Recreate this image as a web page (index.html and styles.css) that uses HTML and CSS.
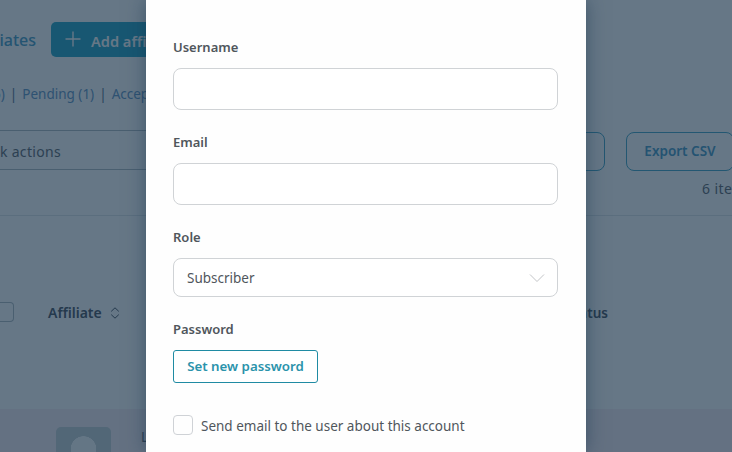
FILE: index.html
```html
<!DOCTYPE html>
<html lang="en">
<head>
    <meta charset="UTF-8">
    <meta name="viewport" content="width=device-width, initial-scale=1.0">
    <title>Affiliates</title>
    <link rel="stylesheet" href="styles.css">
</head>
<body>

    <!-- Affiliates list behind the modal -->
    <div class="page">
        <div class="page-header">
            <h1>iates</h1>
            <button class="add-button">
                <svg width="16" height="16" viewBox="0 0 16 16"><path d="M8 0.5v15M0.5 8h15" /></svg>
                <span>Add affiliate</span>
            </button>
        </div>

        <div class="filters">
            <a>6)</a><i>|</i><a>Pending (1)</a><i>|</i><a>Accepted</a>
        </div>

        <div class="toolbar">
            <div class="bulk">k actions</div>
            <button class="outline-button apply">Filter</button>
            <button class="outline-button export">Export CSV</button>
        </div>
        <div class="count">6 items</div>

        <div class="table-head">
            <span class="head-check"></span>
            <span class="head-name">Affiliate</span>
            <svg class="sort" width="10" height="12" viewBox="0 0 10 12"><path d="M1.2 4.4L5 0.8l3.8 3.6M1.2 7.6L5 11.2l3.8-3.6" /></svg>
            <span class="head-status">Status</span>
        </div>

        <div class="table-row">
            <div class="avatar"></div>
            <span class="name">Lisa</span>
        </div>
    </div>

    <!-- Add affiliate modal -->
    <div class="overlay">
        <form class="modal">
            <div class="field">
                <label for="username">Username</label>
                <input type="text" id="username">
            </div>
            <div class="field">
                <label for="email">Email</label>
                <input type="text" id="email">
            </div>
            <div class="field">
                <label>Role</label>
                <div class="select">
                    <span>Subscriber</span>
                    <svg width="16" height="10" viewBox="0 0 16 10"><path d="M1 1.5l7 7 7-7" /></svg>
                </div>
            </div>
            <div class="field">
                <label>Password</label>
                <button type="button" class="password-button">Set new password</button>
            </div>
            <div class="notify">
                <span class="checkbox"></span>
                <span>Send email to the user about this account</span>
            </div>
        </form>
    </div>

</body>
</html>
```
FILE: styles.css
```css
* {
    box-sizing: border-box;
}
body {
    margin: 0;
    height: 452px;
    overflow: hidden;
    position: relative;
    background-color: #fff;
    font-family: "Noto Sans", "Open Sans", sans-serif;
    font-size: 13.5px;
    line-height: 20px;
    color: #50565c;
}
button {
    font: inherit;
    white-space: nowrap;
}
svg {
    fill: none;
    stroke: currentColor;
    flex: none;
}

/* Page */
.page {
    height: 452px;
    overflow: hidden;
    color: #70767e;
}
.page-header {
    display: flex;
    align-items: center;
    gap: 15px;
    padding-top: 22px;
}
h1 {
    width: 36px;
    margin: 0;
    display: flex;
    justify-content: flex-end;
    font-size: 16px;
    font-weight: 500;
    color: #5aa8cc;
}
.add-button {
    display: flex;
    align-items: center;
    gap: 10px;
    width: 142px;
    height: 35px;
    padding: 2px 14px 0;
    border: none;
    border-radius: 5px;
    background-color: #3cb0cc;
    color: #fff;
    font-size: 14.6px;
    font-weight: 600;
    overflow: hidden;
}
.add-button svg {
    margin-top: -3px;
    stroke-width: 1.4;
}
.filters {
    display: flex;
    margin-top: 27px;
    margin-left: -7px;
    color: #74a2cc;
}
.filters i {
    width: 17.5px;
    text-align: center;
    font-style: normal;
    color: #6a8498;
}
.toolbar {
    display: flex;
    margin-top: 26px;
    height: 41px;
    align-items: flex-end;
}
.bulk {
    flex: none;
    width: 300px;
    height: 40px;
    margin-bottom: 1px;
    border: 1px solid #b8c2c8;
    border-left: none;
    font-size: 14px;
    letter-spacing: 0.3px;
    line-height: 41px;
}
.outline-button {
    flex: none;
    height: 39px;
    padding-bottom: 2px;
    border: 1px solid #58b0cc;
    border-radius: 8px;
    background: none;
    color: #5aa6cc;
    font-weight: 600;
}
.apply {
    width: 90px;
    margin-left: 215px;
}
.export {
    width: 108px;
    margin-left: 21px;
}
.count {
    height: 45px;
    padding: 8px 0 0 702px;
    border-bottom: 1px solid #e4e8ea;
    font-size: 14px;
    letter-spacing: 0.4px;
    white-space: nowrap;
}
.table-head {
    display: flex;
    align-items: center;
    height: 193px;
    padding-top: 1px;
    color: #5c6672;
    font-weight: 600;
}
.head-check {
    width: 14px;
    height: 20px;
    margin-top: -2px;
    border: 1px solid #b8c2c8;
    border-left: none;
    border-radius: 0 4px 4px 0;
}
.head-name {
    margin-left: 34px;
    font-size: 14px;
}
.sort {
    margin-left: 8px;
}
.head-status {
    margin-left: auto;
    margin-right: 124px;
}
.table-row {
    display: flex;
    gap: 30px;
    height: 90px;
    padding: 18px 56px;
    background-color: #fbf1f4;
}
.avatar {
    flex: none;
    width: 55px;
    height: 55px;
    border-radius: 5px;
    background: radial-gradient(circle at 50% 22px, #fbfdfd 12.5px, #ccd6d9 13px);
}

/* Modal */
.overlay {
    position: absolute;
    inset: 0;
    background-color: rgba(0, 28, 53, 0.6);
}
.modal {
    width: 440px;
    height: 452px;
    margin-left: 146px;
    padding: 37px 28px 0 27px;
    background-color: #fefefe;
    box-shadow: 0 0 18px rgba(20, 50, 75, 0.5);
}
.field {
    margin-bottom: 22px;
}
.field label {
    display: block;
    margin-bottom: 11px;
    font-size: 13px;
    font-weight: 600;
}
.field input,
.select {
    display: block;
    width: 100%;
    height: 42px;
    border: 1px solid #d0d3d6;
    border-radius: 8px;
    background-color: #fff;
}
.select {
    display: flex;
    align-items: center;
    justify-content: space-between;
    height: 39px;
    padding: 1px 12px 0 13px;
}
.select svg {
    color: #c3c5c8;
}
.password-button {
    display: block;
    width: 145px;
    height: 33px;
    padding: 0 0 2px;
    border: 1px solid #1f8ba3;
    border-radius: 3px;
    background-color: #fff;
    color: #2b93ab;
    font-size: 13.3px;
    font-weight: 600;
}
.notify {
    display: flex;
    align-items: center;
    gap: 8px;
    padding-top: 10px;
}
.notify span:last-child {
    height: 20px;
    padding-top: 1px;
}
.checkbox {
    width: 20px;
    height: 20px;
    border: 1px solid #cfd2d6;
    border-radius: 4px;
}
```
